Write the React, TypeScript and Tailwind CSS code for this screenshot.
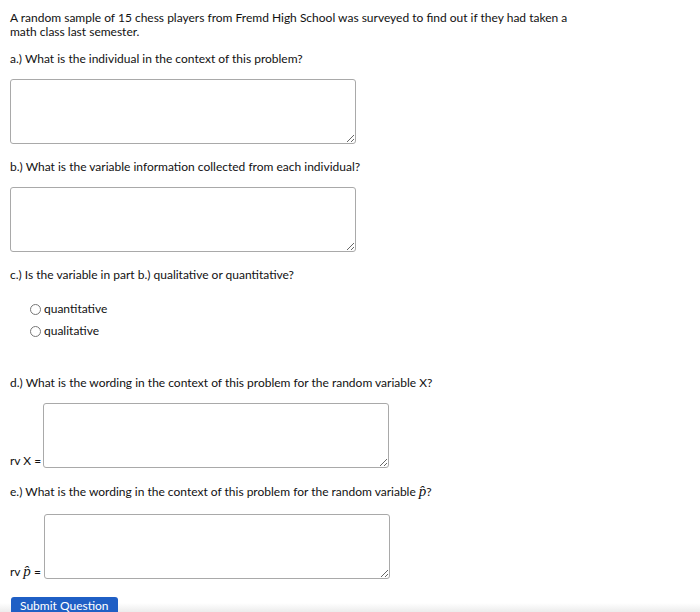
import React from "react";

const ta =
  "block w-[346px] h-[65px] border border-[#a9a9a9] rounded-[3px] bg-white resize";

export default function App() {
  return (
    <div
      className="relative w-[700px] h-[612px] overflow-hidden bg-white text-[#111] text-[12px] leading-[14px]"
      style={{ fontFamily: "Lato, 'Open Sans', sans-serif" }}
    >
      <div className="absolute left-0 right-0 top-[603px] h-[9px] bg-gradient-to-b from-white to-[#ececec]" />
      <div className="relative px-[10px] pt-[11px]">
        <p className="w-[560px]">
          A random sample of 15 chess players from Fremd High School was surveyed to find out if they had taken a
          math class last semester.
        </p>
        <p className="mt-[13px]">a.) What is the individual in the context of this problem?</p>
        <textarea className={ta + " mt-[13px]"} />
        <p className="mt-[16px]">b.) What is the variable information collected from each individual?</p>
        <textarea className={ta + " mt-[13px]"} />
        <p className="mt-[16px]">c.) Is the variable in part b.) qualitative or quantitative?</p>
        <div className="mt-[20px] ml-[20px] flex flex-col gap-[8px]">
          <label className="flex items-center gap-[2px]">
            <span className="w-[11px] h-[11px] rounded-full border border-[#777] bg-white" />
            <span className="ml-[1px]">quantitative</span>
          </label>
          <label className="flex items-center gap-[2px]">
            <span className="w-[11px] h-[11px] rounded-full border border-[#777] bg-white" />
            <span className="ml-[1px]">qualitative</span>
          </label>
        </div>
        <p className="mt-[38px]">d.) What is the wording in the context of this problem for the random variable X?</p>
        <div className="mt-[13px] flex items-end">
          <span className="w-[33px] text-[12px] leading-[12px] mb-[1px]">rv X =</span>
          <textarea className={ta} />
        </div>
        <p className="mt-[16px]">
          e.) What is the wording in the context of this problem for the random variable{" "}
          <span style={{ fontFamily: "'Liberation Serif', serif" }} className="italic text-[15px]">p̂</span>?
        </p>
        <div className="mt-[15px] flex items-end">
          <span className="w-[34px] text-[12px] leading-[12px] mb-[1px]">
            rv <span style={{ fontFamily: "'Liberation Serif', serif" }} className="italic text-[15px]">p̂</span> =
          </span>
          <textarea className={ta} />
        </div>
        <button className="mt-[18px] ml-[1px] px-[9px] h-[16px] rounded-t-[3px] bg-[#1f5fc5] text-white text-[12px] leading-[15px]">
          Submit Question
        </button>
      </div>
    </div>
  );
}
